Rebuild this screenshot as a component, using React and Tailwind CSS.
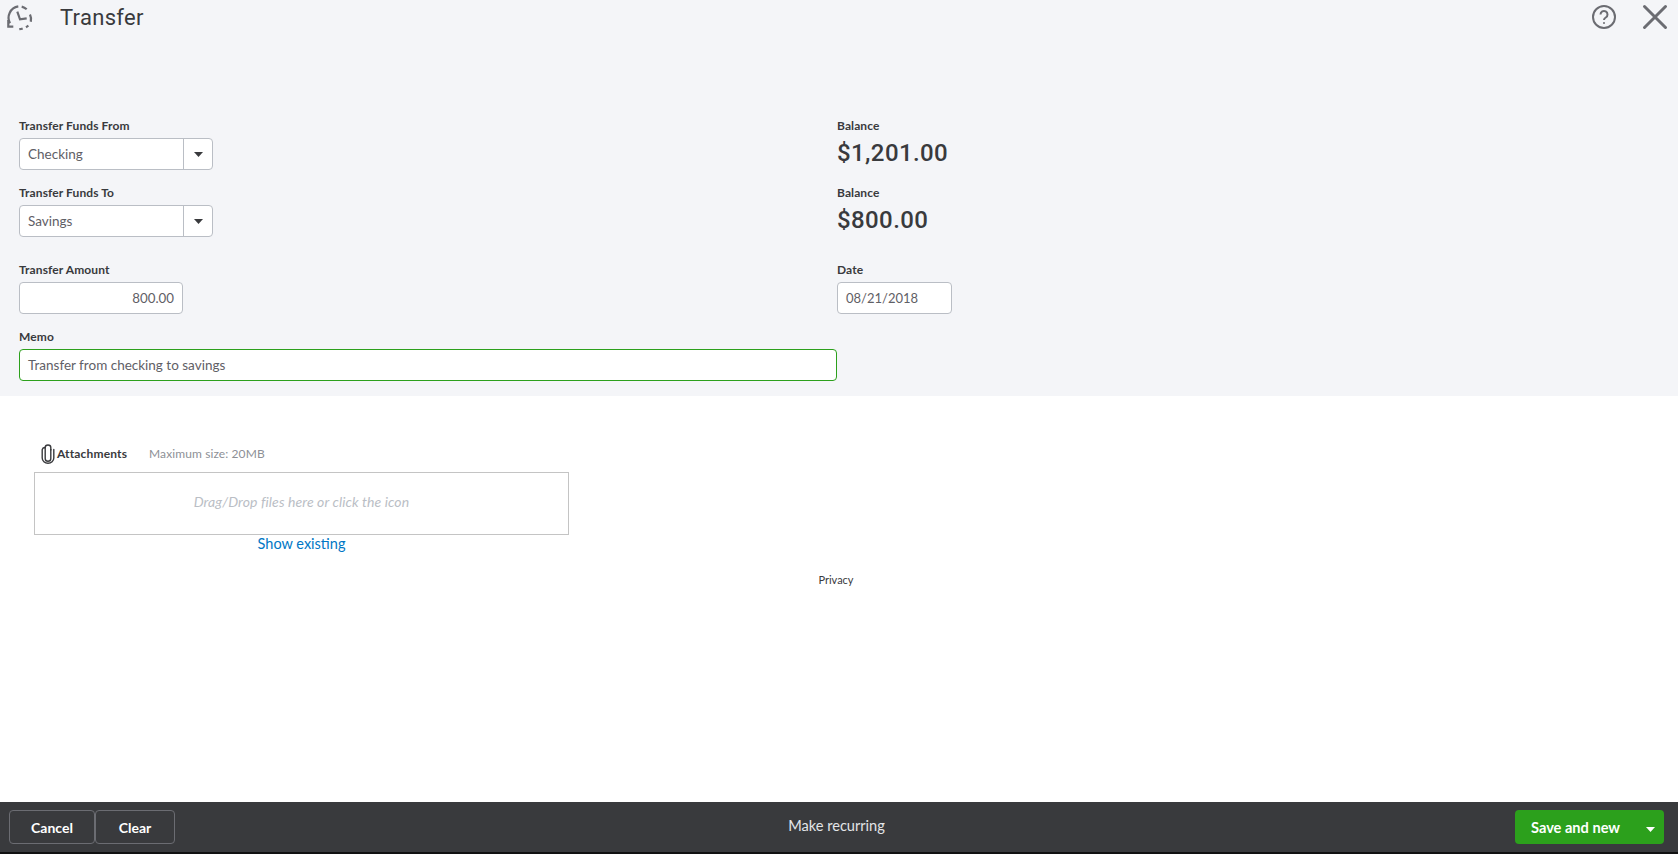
import React from 'react';

const font = "font-['Lato','Liberation_Sans',sans-serif]";

function Label({ children }) {
  return <div className="h-4 text-[12px] leading-4 font-bold text-[#393a3d] tracking-[0.1px]">{children}</div>;
}

function Caret({ className }) {
  return (
    <svg width="9" height="5" viewBox="0 0 9 5" className={className}>
      <path d="M0 0h9L4.5 5z" fill="currentColor" />
    </svg>
  );
}

function Select({ value }) {
  return (
    <div className="mt-1 flex h-8 w-[194px] rounded-sm border border-[#babec5] bg-white">
      <div className="flex flex-1 items-center pl-2 text-[13.5px] text-[#5f6066]">{value}</div>
      <div className="flex w-[29px] items-center justify-center border-l border-[#babec5] text-[#393a3d]">
        <Caret />
      </div>
    </div>
  );
}

function Balance({ amount }) {
  return (
    <div className="mt-[5px] h-7 font-['Roboto',sans-serif] text-[24px] leading-7 font-medium tracking-[0.4px] text-[#393a3d]">
      {amount}
    </div>
  );
}

function HistoryIcon() {
  return (
    <svg width="28" height="28" viewBox="0 0 28 28" fill="none" stroke="#6b6c72" strokeWidth="2.2">
      <path d="M5 20.3A11.5 11.5 0 0 1 13.3 3.4" />
      <path d="M16.7 3.6A11.5 11.5 0 0 1 21.7 6.3M25 11.5A11.5 11.5 0 0 1 25.8 18.7M23.3 22.4A11.5 11.5 0 0 1 21 24.3M17.7 25.4A11.5 11.5 0 0 1 14.3 26.2" />
      <path d="M12.3 8.7L15 16.3l6.7-1" />
      <path d="M3.3 17v6.7h5" />
    </svg>
  );
}

function HelpIcon() {
  return (
    <svg width="26" height="26" viewBox="0 0 26 26" fill="none" stroke="#6b6c72" strokeWidth="2">
      <circle cx="13" cy="13" r="11" />
      <path d="M9.5 10.5a3.5 3.5 0 1 1 5.3 3c-1.2.7-1.8 1.3-1.8 2.5" />
      <circle cx="13" cy="19" r="0.6" fill="#6b6c72" strokeWidth="1" />
    </svg>
  );
}

function CloseIcon() {
  return (
    <svg width="26" height="26" viewBox="0 0 26 26" fill="none" stroke="#6b6c72" strokeWidth="3" strokeLinecap="round">
      <path d="M2.5 2.5l21 21M23.5 2.5l-21 21" />
    </svg>
  );
}

function ClipIcon() {
  return (
    <svg width="14" height="20" viewBox="0 0 14 20" fill="none" stroke="#393a3d" strokeWidth="1.4" strokeLinecap="round">
      <path d="M9.8 5.5v9a2.8 2.8 0 0 1-5.6 0V3.6a2.6 2.6 0 0 0-3 2V14a5.8 5.2 0 0 0 11.6 0V5.5" />
      <path d="M4.2 3.6a2.8 2.6 0 0 1 5.6 0V6" />
    </svg>
  );
}

export default function App() {
  return (
    <div className={`flex h-[854px] flex-col overflow-hidden bg-white ${font}`}>
      {/* Form area */}
      <div className="bg-[#f4f5f8] pb-[15px]">
        <div className="flex h-[34px] items-center pl-[5px] pr-[10px]">
          <HistoryIcon />
          <div className="ml-[27px] font-['Roboto',sans-serif] text-[22px] tracking-[0.3px] text-[#393a3d]">Transfer</div>
          <div className="ml-auto flex items-center gap-[25px]">
            <HelpIcon />
            <CloseIcon />
          </div>
        </div>

        <div className="flex pt-[84px]">
          <div className="w-[837px] pl-[19px]">
            <Label>Transfer Funds From</Label>
            <Select value="Checking" />
            <div className="mt-[15px]"><Label>Transfer Funds To</Label></div>
            <Select value="Savings" />
            <div className="mt-[25px]"><Label>Transfer Amount</Label></div>
            <div className="mt-1 flex h-8 w-[164px] items-center justify-end rounded-sm border border-[#babec5] bg-white pr-2 pt-px text-[13.3px] text-[#5f6066]">
              800.00
            </div>
            <div className="mt-[15px]"><Label>Memo</Label></div>
            <div className="mt-1 flex h-8 items-center rounded-sm border border-[#2ca01c] bg-white pl-2 text-[13.5px] text-[#5f6066]">
              Transfer from checking to savings
            </div>
          </div>

          <div>
            <Label>Balance</Label>
            <Balance amount="$1,201.00" />
            <div className="mt-[18px]"><Label>Balance</Label></div>
            <Balance amount="$800.00" />
            <div className="mt-7"><Label>Date</Label></div>
            <div className="mt-1 flex h-8 w-[115px] items-center rounded-sm border border-[#babec5] bg-white pl-2 pt-px text-[13px] text-[#5f6066]">
              08/21/2018
            </div>
          </div>
        </div>
      </div>

      {/* Attachments */}
      <div className="flex-1 pt-12">
        <div className="ml-[34px] w-[535px]">
          <div className="flex h-5 items-center pl-[7px]">
            <ClipIcon />
            <span className="ml-[2px] text-[12px] font-bold tracking-[0.15px] text-[#393a3d]">Attachments</span>
            <span className="ml-[22px] text-[12px] tracking-[0.1px] text-[#8d9096]">Maximum size: 20MB</span>
          </div>
          <div className="mt-2 flex h-[63px] items-center justify-center border border-[#c4c4c4] pb-[5px] text-[14px] tracking-[0.1px] italic text-[#babec5]">
            Drag/Drop files here or click the icon
          </div>
          <div className="flex h-[18px] items-center justify-center text-[14.5px] text-[#0077c5]">Show existing</div>
        </div>
        <div className="mt-5 flex h-[14px] w-[1672px] items-center justify-center text-[11px] text-[#393a3d]">Privacy</div>
      </div>

      {/* Footer */}
      <div className="flex h-[50px] items-center justify-between bg-[#393a3d] pl-[9px] pr-[14px]">
        <div className="flex w-[300px]">
          <button className="h-[34px] w-[86px] rounded-sm border border-[#6b6c72] text-[14px] font-bold text-white">Cancel</button>
          <button className="h-[34px] w-[80px] rounded-sm border border-[#6b6c72] text-[14px] font-bold text-white">Clear</button>
        </div>
        <div className="pb-[2px] text-[14.6px] text-[#e3e5e8]">Make recurring</div>
        <div className="flex w-[300px] justify-end">
          <button className="flex h-[34px] w-[149px] items-center rounded-sm bg-[#2ca01c] pl-4 pr-[9px] pt-px text-[14.6px] font-bold text-white">
            Save and new
            <Caret className="ml-auto mt-1" />
          </button>
        </div>
      </div>
      <div className="h-[2px] bg-[#111]" />
    </div>
  );
}
